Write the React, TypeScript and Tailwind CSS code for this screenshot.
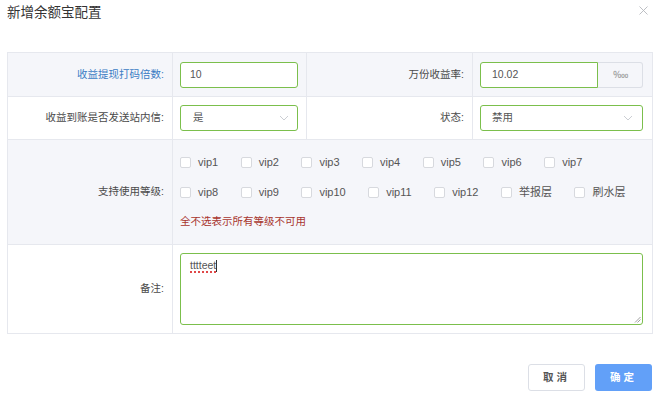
import React from "react";

const levelsTop = ["vip1", "vip2", "vip3", "vip4", "vip5", "vip6", "vip7"];
const levelsBottom = ["vip8", "vip9", "vip10", "vip11", "vip12", "举报层", "刷水层"];

function Check({ label }: { label: string }) {
    return (
        <label className="flex items-center mr-[22.5px] h-[18px]">
            <span className="w-[11px] h-[11px] border border-[#d7d9de] bg-white rounded-[2px] mr-[7px]"></span>
            <span className="text-[11px] text-[#555]">{label}</span>
        </label>
    );
}

function Chevron() {
    return (
        <svg width="10" height="6" viewBox="0 0 10 6" className="text-[#c5c8ce]">
            <path d="M1 1l4 4 4-4" fill="none" stroke="currentColor" strokeWidth="0.9" />
        </svg>
    );
}

export default function App() {
    return (
        <div
            className="w-[657px] h-[395px] bg-white relative text-[#4a4a4a]"
            style={{ fontFamily: '"Liberation Sans", "Noto Sans CJK SC", sans-serif' }}
        >
            {/* header */}
            <div className="h-[52px] pl-[7px] pt-[4px]">
                <h2 className="text-[13.5px] leading-[18px] text-[#333]">新增余额宝配置</h2>
            </div>
            <button className="absolute right-[9px] top-[6px] w-[9px] h-[9px] text-[#b5b8bd]">
                <svg width="9" height="9" viewBox="0 0 9 9">
                    <path d="M0.5 0.5l8 8M8.5 0.5l-8 8" stroke="currentColor" strokeWidth="0.9" />
                </svg>
            </button>

            {/* form table */}
            <div className="ml-[7px] w-[646px] border border-[#e6e8ee] text-[10.5px]">
                {/* row 1 */}
                <div className="flex h-[44px] border-b border-[#e6e8ee] bg-[#f5f6fa]">
                    <div className="w-[165px] border-r border-[#e6e8ee] flex items-center justify-end pr-[8px] text-[#3b7cc4]">
                        收益提现打码倍数:
                    </div>
                    <div className="w-[134px] border-r border-[#e6e8ee] flex items-center pl-[7px]">
                        <div className="w-[118px] h-[26px] border border-[#7bbf4c] rounded-[3px] bg-white flex items-center pl-[9px] text-[#555]">
                            10
                        </div>
                    </div>
                    <div className="w-[166px] border-r border-[#e6e8ee] flex items-center justify-end pr-[8px]">
                        万份收益率:
                    </div>
                    <div className="flex-1 flex items-center pl-[7px]">
                        <div className="flex h-[26px] w-[163px]">
                            <div className="w-[118px] border border-[#7bbf4c] rounded-l-[3px] bg-white flex items-center pl-[11px] text-[#555]">
                                10.02
                            </div>
                            <div className="flex-1 border border-l-0 border-[#dcdfe6] rounded-r-[3px] bg-[#f5f6fa] flex items-center justify-center text-[#999] text-[10px]">
                                ‱
                            </div>
                        </div>
                    </div>
                </div>

                {/* row 2 */}
                <div className="flex h-[43px] border-b border-[#e6e8ee] bg-white">
                    <div className="w-[165px] border-r border-[#e6e8ee] flex items-center justify-end pr-[8px]">
                        收益到账是否发送站内信:
                    </div>
                    <div className="w-[134px] border-r border-[#e6e8ee] flex items-center pl-[7px]">
                        <div className="w-[118px] h-[26px] border border-[#7bbf4c] rounded-[3px] bg-white flex items-center justify-between pl-[12px] pr-[8px] text-[#555]">
                            <span>是</span>
                            <Chevron />
                        </div>
                    </div>
                    <div className="w-[166px] border-r border-[#e6e8ee] flex items-center justify-end pr-[8px]">
                        状态:
                    </div>
                    <div className="flex-1 flex items-center pl-[7px]">
                        <div className="w-[163px] h-[26px] border border-[#7bbf4c] rounded-[3px] bg-white flex items-center justify-between pl-[11px] pr-[9px] text-[#555]">
                            <span>禁用</span>
                            <Chevron />
                        </div>
                    </div>
                </div>

                {/* row 3 */}
                <div className="flex h-[105px] border-b border-[#e6e8ee] bg-[#f5f6fa]">
                    <div className="w-[165px] border-r border-[#e6e8ee] flex items-center justify-end pr-[8px]">
                        支持使用等级:
                    </div>
                    <div className="flex-1 flex flex-col gap-[12px] pt-[13px] pl-[7px]">
                        <div className="flex">
                            {levelsTop.map((l) => (
                                <Check key={l} label={l} />
                            ))}
                        </div>
                        <div className="flex">
                            {levelsBottom.map((l) => (
                                <Check key={l} label={l} />
                            ))}
                        </div>
                        <div className="h-[18px] flex items-center text-[#a8352e]">全不选表示所有等级不可用</div>
                    </div>
                </div>

                {/* row 4 */}
                <div className="flex h-[88px] bg-white">
                    <div className="w-[165px] border-r border-[#e6e8ee] flex items-center justify-end pr-[8px]">
                        备注:
                    </div>
                    <div className="flex-1 pl-[7px] pt-[8px]">
                        <div className="relative w-[463px] h-[72px] border border-[#7bbf4c] rounded-[3px] bg-white pl-[9px] pt-[4px] text-[#555]">
                            <span className="underline decoration-dotted decoration-[#e04848] decoration-2 underline-offset-2">tttteet</span>
                            <span className="inline-block w-px h-[12px] bg-[#333] align-middle"></span>
                            <svg width="7" height="7" viewBox="0 0 7 7" className="absolute right-[1px] bottom-[1px] text-[#888]">
                                <path d="M1 6.5L6.5 1M3.5 6.5L6.5 3.5" stroke="currentColor" strokeWidth="0.8" />
                            </svg>
                        </div>
                    </div>
                </div>
            </div>

            {/* footer */}
            <div className="flex justify-end gap-[10px] pr-[5px] mt-[30px]">
                <button className="w-[57px] h-[27px] border border-[#dcdfe6] rounded-[3px] bg-white text-[10.5px] font-bold text-[#555] tracking-[3px]">
                    取消
                </button>
                <button className="w-[57px] h-[27px] rounded-[3px] bg-[#62a0f8] text-[10.5px] font-bold text-white tracking-[3px]">
                    确定
                </button>
            </div>
        </div>
    );
}
